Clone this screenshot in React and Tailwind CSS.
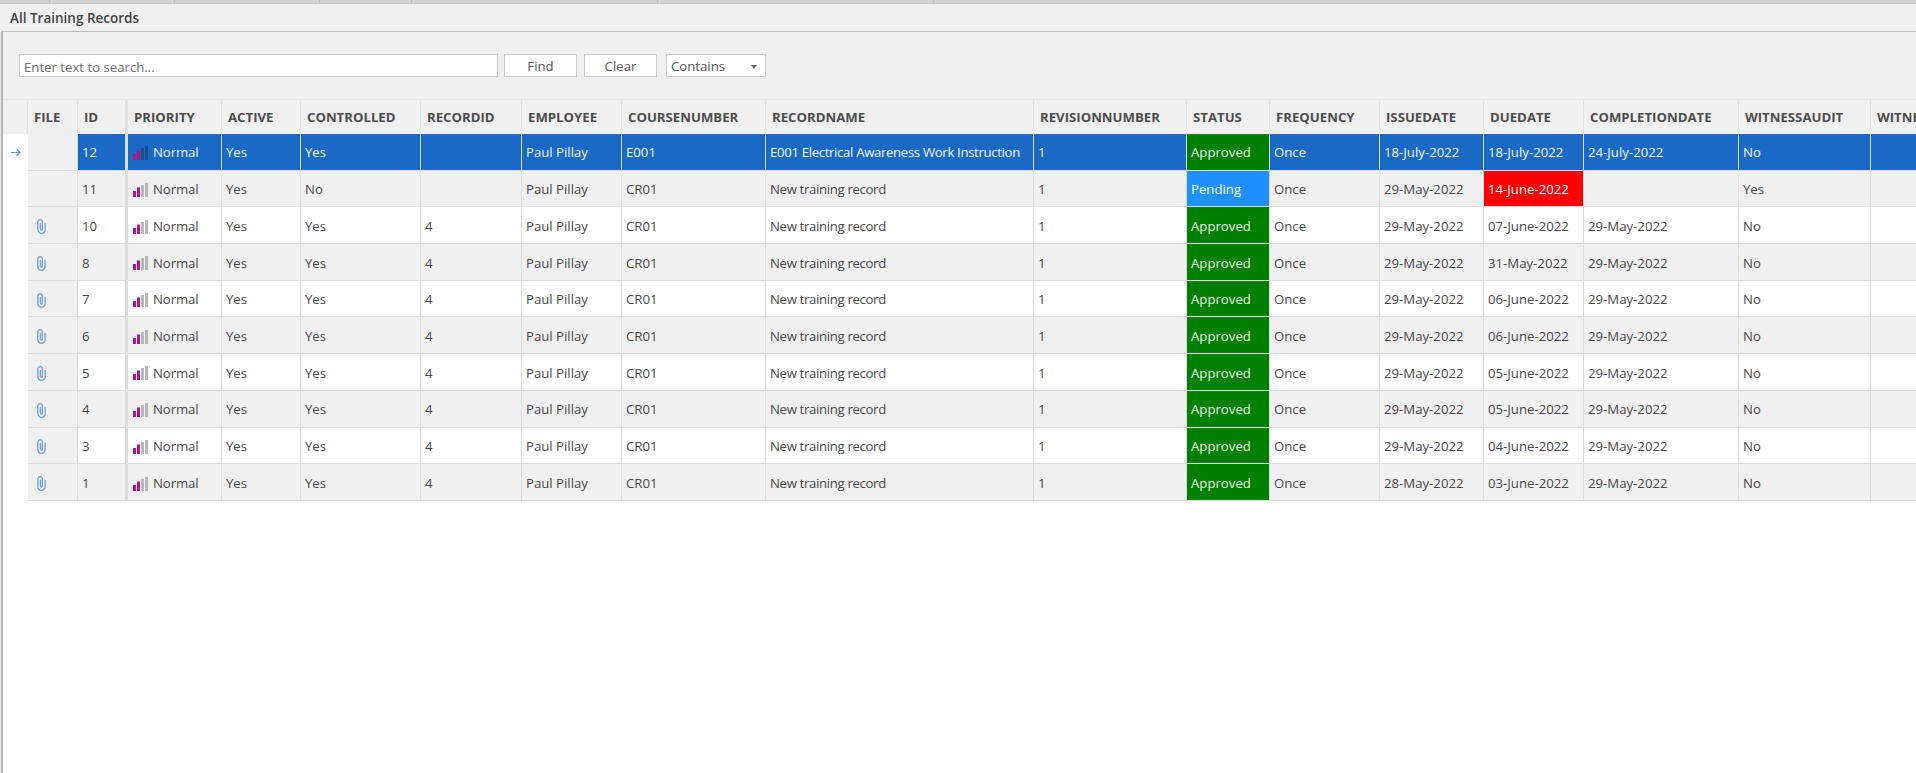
import React from 'react';

const COLUMNS = [
  { key: 'file', label: 'FILE', width: 'w-[50px]' },
  { key: 'id', label: 'ID', width: 'w-[50px] border-r-[3px] border-r-[#c8c8c8]' },
  { key: 'priority', label: 'PRIORITY', width: 'w-[94px]' },
  { key: 'active', label: 'ACTIVE', width: 'w-[79px]' },
  { key: 'controlled', label: 'CONTROLLED', width: 'w-[120px]' },
  { key: 'recordid', label: 'RECORDID', width: 'w-[101px]' },
  { key: 'employee', label: 'EMPLOYEE', width: 'w-[100px]' },
  { key: 'course', label: 'COURSENUMBER', width: 'w-[144px]' },
  { key: 'name', label: 'RECORDNAME', width: 'w-[268px]' },
  { key: 'revision', label: 'REVISIONNUMBER', width: 'w-[153px]' },
  { key: 'status', label: 'STATUS', width: 'w-[83px]' },
  { key: 'frequency', label: 'FREQUENCY', width: 'w-[110px]' },
  { key: 'issue', label: 'ISSUEDATE', width: 'w-[104px]' },
  { key: 'due', label: 'DUEDATE', width: 'w-[100px]' },
  { key: 'completion', label: 'COMPLETIONDATE', width: 'w-[155px]' },
  { key: 'audit', label: 'WITNESSAUDIT', width: 'w-[132px]' },
  { key: 'witness', label: 'WITNESSNAME', width: 'w-[132px]' },
];

const training = (id, issue, due, completion, recordid = '4') => ({
  id, file: true, active: 'Yes', controlled: 'Yes', recordid, course: 'CR01', name: 'New training record',
  status: 'Approved', issue, due, completion, audit: 'No',
});

const RECORDS = [
  { id: '12', file: false, active: 'Yes', controlled: 'Yes', recordid: '', course: 'E001', name: 'E001 Electrical Awareness Work Instruction', status: 'Approved', issue: '18-July-2022', due: '18-July-2022', completion: '24-July-2022', audit: 'No', selected: true },
  { id: '11', file: false, active: 'Yes', controlled: 'No', recordid: '', course: 'CR01', name: 'New training record', status: 'Pending', issue: '29-May-2022', due: '14-June-2022', completion: '', audit: 'Yes', overdue: true },
  training('10', '29-May-2022', '07-June-2022', '29-May-2022'),
  training('8', '29-May-2022', '31-May-2022', '29-May-2022'),
  training('7', '29-May-2022', '06-June-2022', '29-May-2022'),
  training('6', '29-May-2022', '06-June-2022', '29-May-2022'),
  training('5', '29-May-2022', '05-June-2022', '29-May-2022'),
  training('4', '29-May-2022', '05-June-2022', '29-May-2022'),
  training('3', '29-May-2022', '04-June-2022', '29-May-2022'),
  training('1', '28-May-2022', '03-June-2022', '29-May-2022'),
];

const PriorityIcon = ({ selected }) => {
  const rest = selected ? '#17508f' : '#b8b8b8';
  return (
    <svg width="15" height="14" viewBox="0 0 15 14" className="shrink-0">
      <rect x="0" y="8" width="3" height="6" fill="#b5128a" />
      <rect x="4" y="4.5" width="3" height="9.5" fill="#b5128a" />
      <rect x="8" y="2" width="3" height="12" fill={rest} />
      <rect x="12" y="0" width="3" height="14" fill={rest} />
    </svg>
  );
};

const ClipIcon = () => (
  <svg width="9" height="15" viewBox="0 0 9 15" fill="none" stroke="#6f9fdc" strokeWidth="1.3">
    <path d="M8.2 4v6.6a3.7 3.7 0 0 1-7.4 0V3a2.3 2.3 0 0 1 4.6 0v7a1 1 0 0 1-2 0V4" />
  </svg>
);

const ArrowIcon = () => (
  <svg width="10" height="9" viewBox="0 0 10 9" fill="none" stroke="#5b9be0" strokeWidth="1.1">
    <path d="M0 4.5h9M5.5 1l3.5 3.5L5.5 8" />
  </svg>
);

const cellValue = (col, row) => {
  if (col.key === 'employee') return 'Paul Pillay';
  if (col.key === 'revision') return '1';
  if (col.key === 'frequency') return 'Once';
  return row[col.key];
};

const Cell = ({ col, row, striped }) => {
  let tone = striped ? 'bg-[#f0f0f0] text-[#484848]' : 'bg-white text-[#484848]';
  if (row.selected) tone = 'bg-[#1a69c4] text-[#f2f7fc] border-r-[#7ea9dc]';
  if (col.key === 'file') tone = 'bg-[#f0f0f0] text-[#484848]';
  if (col.key === 'status') tone = row.status === 'Pending' ? 'bg-[#1e90ff] text-white' : 'bg-[#008000] text-[#e8f5e8]';
  if (col.key === 'due' && row.overdue) tone = 'bg-[#ff0000] text-white';

  return (
    <div className={`${col.width} shrink-0 h-full flex items-center pt-[3px] px-[4px] border-r border-r-[#dcdcdc] border-b border-b-[#dcdcdc] ${tone}`}>
      {col.key === 'file' && row.file && <span className="ml-[5px] flex"><ClipIcon /></span>}
      {col.key === 'priority' && (
        <span className="flex items-center gap-[5px] ml-[1px]"><PriorityIcon selected={row.selected} /><span className="tracking-[-0.1px]">Normal</span></span>
      )}
      {col.key !== 'file' && col.key !== 'priority' && (
        <span className={`whitespace-nowrap ${col.key === 'name' ? 'tracking-[-0.34px]' : ''}`}>{cellValue(col, row)}</span>
      )}
    </div>
  );
};

export default function App() {
  return (
    <div className="w-[1916px] h-[773px] overflow-hidden bg-white font-['Open_Sans','Noto_Sans',sans-serif] text-[13.2px] flex flex-col">
      {/* strip of the window behind */}
      <div className="h-[4px] shrink-0 flex bg-[#d4d4d4] border-b border-b-[#c4c4c4]">
        <div className="w-[50px] border-r border-r-[#bdbdbd]" />
        <div className="w-[125px] border-r border-r-[#bdbdbd]" />
        <div className="w-[145px] border-r border-r-[#bdbdbd]" />
        <div className="w-[92px] border-r border-r-[#bdbdbd]" />
        <div className="w-[246px] border-r border-r-[#bdbdbd]" />
        <div className="w-[276px] border-r border-r-[#bdbdbd]" />
      </div>

      <div className="h-[27px] shrink-0 bg-[#f0f0f0] flex items-center pt-[2px] pl-[10px] font-semibold text-[13.5px] text-[#444444]">
        All Training Records
      </div>

      <div className="flex flex-1">
        {/* panel edge */}
        <div className="w-[3px] shrink-0 bg-[#b4b4b4] border-l border-l-[#ececec]" />

        <div className="flex-1 min-w-0 border-t border-t-[#bcbcbc]">
          {/* search bar */}
          <div className="h-[67px] bg-[#f0f0f0] flex items-start pt-[22px] pl-[16px] text-[#555555]">
            <input
              placeholder="Enter text to search..."
              className="w-[479px] h-[23px] bg-white border border-[#c8c8c8] px-[4px] pt-[2px] outline-none placeholder:text-[#6d6d6d]"
            />
            <button className="ml-[6px] w-[73px] h-[23px] pt-[2px] bg-white border border-[#c8c8c8]">Find</button>
            <button className="ml-[7px] w-[73px] h-[23px] pt-[2px] bg-white border border-[#c8c8c8]">Clear</button>
            <div className="ml-[9px] w-[100px] h-[23px] pt-[2px] bg-white border border-[#c8c8c8] flex items-center justify-between pl-[4px] pr-[8px]">
              <span>Contains</span>
              <span className="w-0 h-0 border-x-[3px] border-x-transparent border-t-[4px] border-t-[#666666]" />
            </div>
          </div>

          {/* header row */}
          <div className="flex h-[35px] pt-0 bg-[#f0f0f0] border-t border-t-[#e4e4e4] font-bold text-[13.2px] text-[#4d4d4d]">
            <div className="w-[25px] shrink-0 border-r border-r-[#e0e0e0]" />
            {COLUMNS.map((col) => (
              <div key={col.key} className={`${col.width} shrink-0 flex items-center pt-[2px] px-[6px] whitespace-nowrap overflow-hidden border-r border-r-[#e0e0e0]`}>
                {col.label}
              </div>
            ))}
          </div>

          {RECORDS.map((row, index) => (
            <div key={row.id} className="flex h-[36.7px]">
              <div className="w-[25px] shrink-0 bg-white flex items-center justify-center">
                {row.selected && <ArrowIcon />}
              </div>
              {COLUMNS.map((col) => (
                <Cell key={col.key} col={col} row={row} striped={index % 2 === 1} />
              ))}
            </div>
          ))}
        </div>
      </div>
    </div>
  );
}
